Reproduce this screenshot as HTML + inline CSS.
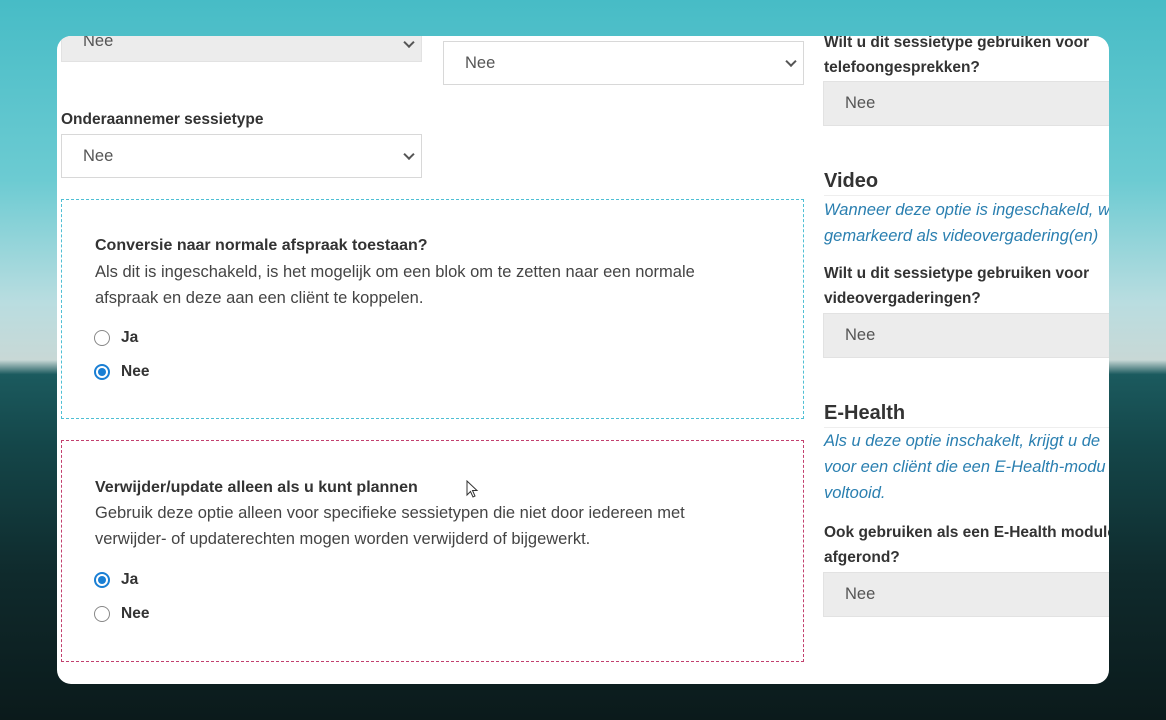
<!DOCTYPE html>
<html><head><meta charset="utf-8"><style>
*{margin:0;padding:0;box-sizing:border-box}
body{width:1166px;height:720px;overflow:hidden;position:relative;font-family:"Liberation Sans",sans-serif;color:#333;
background:linear-gradient(180deg,#47bcc6 0%,#6ccbd2 25%,#b9dde0 42%,#c8d8d6 50%,#1b5a5e 52%,#144649 62%,#0f2a2c 80%,#0b1a1b 100%);}
.card{position:absolute;left:57px;top:36px;width:1052px;height:648px;background:#fff;border-radius:14px;overflow:hidden}
.a{position:absolute;white-space:nowrap}
.sel{position:absolute;border:1px solid #d8d8d8;background:#fff;font-size:16.5px;color:#555;padding-left:21px;display:flex;align-items:center}
.sel.g{background:#ececec;border-color:#e2e2e2}
.sel .ch{position:absolute;right:8px;top:50%;width:8px;height:8px;border-right:2px solid #555;border-bottom:2px solid #555;transform:translateY(-70%) rotate(45deg)}
.lbl{font-size:15.5px;font-weight:bold;color:#333}
.txt{font-size:16.5px;color:#444}
.it{font-size:16.5px;color:#2a7fb0;font-style:italic}
.h{font-size:20px;font-weight:bold;color:#333}
.box{position:absolute;left:4px;width:743px}
.r{position:absolute;width:16px;height:16px;border-radius:50%;border:1.5px solid #888;background:#fff}
.r.on{border:2px solid #1a7fd4}
.r.on::after{content:"";position:absolute;left:2px;top:2px;width:8px;height:8px;border-radius:50%;background:#1a7fd4}
</style></head><body>
<div class="card">
<div class="sel g" style="left:4px;top:-10px;width:361px;height:36px"><span style="position:relative;top:-3px">Nee</span><span class="ch"></span></div>
<div class="sel" style="left:386px;top:5px;width:361px;height:44px">Nee<span class="ch"></span></div>
<div class="a lbl" style="left:4px;top:75px">Onderaannemer sessietype</div>
<div class="sel" style="left:4px;top:98px;width:361px;height:44px">Nee<span class="ch"></span></div>

<div class="box" style="top:163px;height:220px;border:1px dashed #4fbfd4"></div>
<div class="a lbl" style="left:38px;top:201px;font-size:16px">Conversie naar normale afspraak toestaan?</div>
<div class="a txt" style="left:38px;top:227px">Als dit is ingeschakeld, is het mogelijk om een blok om te zetten naar een normale</div>
<div class="a txt" style="left:38px;top:253px">afspraak en deze aan een cliënt te koppelen.</div>
<div class="r" style="left:37px;top:294px"></div><div class="a lbl" style="left:64px;top:293px">Ja</div>
<div class="r on" style="left:37px;top:328px"></div><div class="a lbl" style="left:64px;top:327px">Nee</div>

<div class="box" style="top:404px;height:222px;border:1px dashed #c2406e"></div>
<div class="a lbl" style="left:38px;top:443px;font-size:16px">Verwijder/update alleen als u kunt plannen</div>
<div class="a txt" style="left:38px;top:468px">Gebruik deze optie alleen voor specifieke sessietypen die niet door iedereen met</div>
<div class="a txt" style="left:38px;top:494px">verwijder- of updaterechten mogen worden verwijderd of bijgewerkt.</div>
<div class="r on" style="left:37px;top:536px"></div><div class="a lbl" style="left:64px;top:535px">Ja</div>
<div class="r" style="left:37px;top:570px"></div><div class="a lbl" style="left:64px;top:569px">Nee</div>
<svg class="a" style="left:409px;top:444px" width="14" height="20" viewBox="0 0 14 20"><path d="M1 1 L1 15 L4.5 11.5 L7 17 L9 16 L6.5 10.5 L11 10.5 Z" fill="#fff" stroke="#333" stroke-width="1"/></svg>

<div class="a lbl" style="left:767px;top:-2px">Wilt u dit sessietype gebruiken voor</div>
<div class="a lbl" style="left:767px;top:23px">telefoongesprekken?</div>
<div class="sel g" style="left:766px;top:45px;width:300px;height:45px">Nee</div>
<div class="a h" style="left:767px;top:134px">Video</div>
<div class="a" style="left:767px;top:159px;width:300px;border-top:1px solid #eee"></div>
<div class="a it" style="left:767px;top:165px">Wanneer deze optie is ingeschakeld, w</div>
<div class="a it" style="left:767px;top:191px">gemarkeerd als videovergadering(en)</div>
<div class="a lbl" style="left:767px;top:229px">Wilt u dit sessietype gebruiken voor</div>
<div class="a lbl" style="left:767px;top:254px">videovergaderingen?</div>
<div class="sel g" style="left:766px;top:277px;width:300px;height:45px">Nee</div>
<div class="a h" style="left:767px;top:366px">E-Health</div>
<div class="a" style="left:767px;top:391px;width:300px;border-top:1px solid #eee"></div>
<div class="a it" style="left:767px;top:396px">Als u deze optie inschakelt, krijgt u de </div>
<div class="a it" style="left:767px;top:422px">voor een cliënt die een E-Health-modu</div>
<div class="a it" style="left:767px;top:448px">voltooid.</div>
<div class="a lbl" style="left:767px;top:488px">Ook gebruiken als een E-Health module</div>
<div class="a lbl" style="left:767px;top:513px">afgerond?</div>
<div class="sel g" style="left:766px;top:536px;width:300px;height:45px">Nee</div>
</div>
</body></html>
